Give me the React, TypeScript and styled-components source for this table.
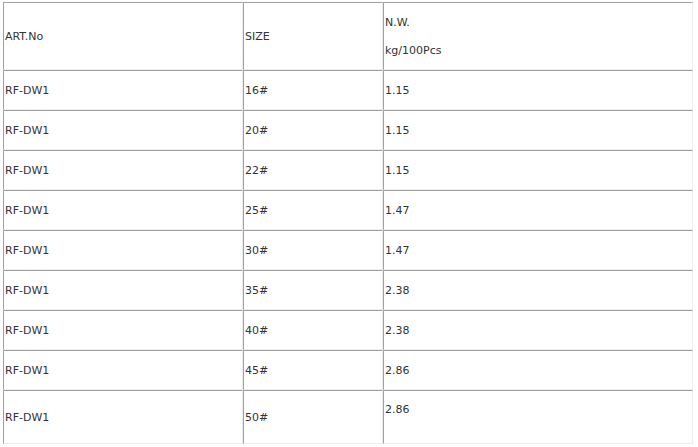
import React from "react";
import styled, { createGlobalStyle } from "styled-components";

const Global = createGlobalStyle`
  html, body { margin: 0; padding: 0; background: #fff; }
  body { font-family: "DejaVu Sans", Verdana, sans-serif; }
`;

const Page = styled.div`
  padding: 2px 0 0 3px;
`;

const Table = styled.table`
  border-collapse: separate;
  border-spacing: 0;
  table-layout: fixed;
  width: 690px;
  font-size: 11px;
  color: #333;
`;

const Cell = styled.td<{ $h?: number }>`
  box-sizing: border-box;
  height: ${(p) => p.$h ?? 40}px;
  padding: 0 1px;
  vertical-align: middle;
  text-align: left;
  border-top: 1px solid #a0a0a0;
  border-left: 1px solid #a0a0a0;
  border-right: 1px solid #ececec;
  border-bottom: 1px solid #ececec;
  white-space: nowrap;
`;

const Stack = styled.div`
  padding-top: 2px;
`;

const Line = styled.div`
  line-height: 28px;
`;

const Short = styled.div`
  line-height: 14px;
  min-height: 14px;
`;

const rows = [
  ["16#", "1.15"],
  ["20#", "1.15"],
  ["22#", "1.15"],
  ["25#", "1.47"],
  ["30#", "1.47"],
  ["35#", "2.38"],
  ["40#", "2.38"],
  ["45#", "2.86"],
];

export default function App() {
  return (
    <>
      <Global />
      <Page>
        <Table>
          <colgroup>
            <col style={{ width: 240 }} />
            <col style={{ width: 140 }} />
            <col style={{ width: 310 }} />
          </colgroup>
          <tbody>
            <tr>
              <Cell $h={68}>ART.No</Cell>
              <Cell $h={68}>SIZE</Cell>
              <Cell $h={68}>
                <Stack>
                  <Line>N.W.</Line>
                  <Line>kg/100Pcs</Line>
                </Stack>
              </Cell>
            </tr>
            {rows.map(([s, w], i) => (
              <tr key={i}>
                <Cell>RF-DW1</Cell>
                <Cell>{s}</Cell>
                <Cell>{w}</Cell>
              </tr>
            ))}
            <tr>
              <Cell $h={54}>RF-DW1</Cell>
              <Cell $h={54}>50#</Cell>
              <Cell $h={54}>
                <Short>2.86</Short>
                <Short />
              </Cell>
            </tr>
          </tbody>
        </Table>
      </Page>
    </>
  );
}
